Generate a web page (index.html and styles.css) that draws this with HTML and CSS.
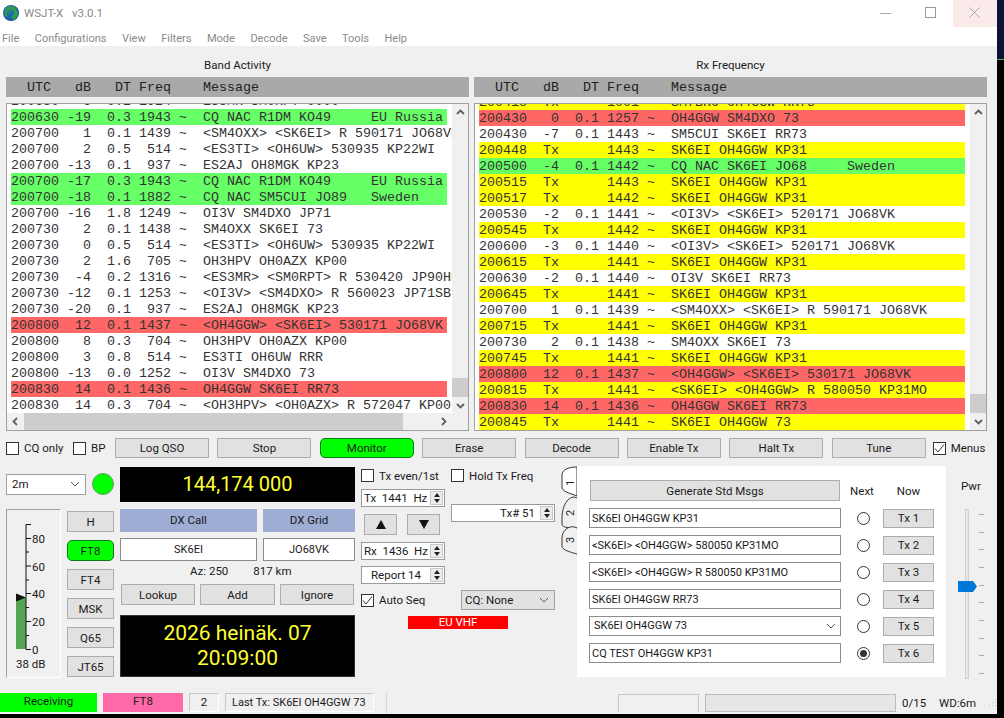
FILE: index.html
```html
<!DOCTYPE html>
<html lang="en">
<head>
<meta charset="utf-8">
<title>WSJT-X v3.0.1</title>
<link rel="stylesheet" href="styles.css">
</head>
<body>
<div class="desktop">
<div class="window">
  <header class="titlebar">
    <svg class="logo" width="18" height="18" viewBox="0 0 18 18">
      <defs><radialGradient id="globe" cx="0.45" cy="0.45" r="0.6"><stop offset="0" stop-color="#1f7f9a"/><stop offset="0.7" stop-color="#1d5fb0"/><stop offset="1" stop-color="#123c8c"/></radialGradient></defs>
      <circle cx="9" cy="9" r="8" fill="url(#globe)"/>
      <path d="M5 3 Q9 1 13 3 L16 9 Q16 14 11 16 L9 13 Q13 11 12 7 Q9 4 6 7 Q4 10 6 13 L3 12 Q1 7 5 3Z" fill="#2e9e4a"/>
    </svg>
    <span class="title">WSJT-X&nbsp;&nbsp; v3.0.1</span>
    <div class="winctl">
      <div class="winbtn"><svg width="12" height="12" viewBox="0 0 12 12"><path d="M0 6.500H11" stroke="#a8a8a8" fill="none"/></svg></div>
      <div class="winbtn"><svg width="12" height="12" viewBox="0 0 12 12"><rect x="0.500" y="0.500" width="10" height="10" stroke="#999" fill="none"/></svg></div>
      <div class="winbtn winclose"><svg width="12" height="12" viewBox="0 0 12 12"><path d="M0.500 0.500L10.500 10.500M10.500 0.500L0.500 10.500" stroke="#aaa" fill="none"/></svg></div>
    </div>
  </header>
  <nav class="menubar">
    <span class="menu">File</span><span class="menu">Configurations</span><span class="menu">View</span><span class="menu">Filters</span><span class="menu">Mode</span><span class="menu">Decode</span><span class="menu">Save</span><span class="menu">Tools</span><span class="menu">Help</span>
  </nav>

  <main class="content">
    <section class="panels">
      <div class="panel panel-left">
        <div class="panel-title">Band Activity</div>
        <div class="heading mono">  UTC   dB   DT Freq    Message</div>
        <div class="listbox">
          <div class="list-main">
            <div class="rows mono rows-left">
              <div class="row">200630   6  0.2 1924 ~  ES3MR SM0RPT 0000</div>
              <div class="row green">200630 -19  0.3 1943 ~  CQ NAC R1DM KO49     EU Russia</div>
              <div class="row">200700   1  0.1 1439 ~  &lt;SM4OXX&gt; &lt;SK6EI&gt; R 590171 JO68VK</div>
              <div class="row">200700   2  0.5  514 ~  &lt;ES3TI&gt; &lt;OH6UW&gt; 530935 KP22WI</div>
              <div class="row">200700 -13  0.1  937 ~  ES2AJ OH8MGK KP23</div>
              <div class="row green">200700 -17  0.3 1943 ~  CQ NAC R1DM KO49     EU Russia</div>
              <div class="row green">200700 -18  0.1 1882 ~  CQ NAC SM5CUI JO89   Sweden</div>
              <div class="row">200700 -16  1.8 1249 ~  OI3V SM4DXO JP71</div>
              <div class="row">200730   2  0.1 1438 ~  SM4OXX SK6EI 73</div>
              <div class="row">200730   0  0.5  514 ~  &lt;ES3TI&gt; &lt;OH6UW&gt; 530935 KP22WI</div>
              <div class="row">200730   2  1.6  705 ~  OH3HPV OH0AZX KP00</div>
              <div class="row">200730  -4  0.2 1316 ~  &lt;ES3MR&gt; &lt;SM0RPT&gt; R 530420 JP90HE</div>
              <div class="row">200730 -12  0.1 1253 ~  &lt;OI3V&gt; &lt;SM4DXO&gt; R 560023 JP71SB</div>
              <div class="row">200730 -20  0.1  937 ~  ES2AJ OH8MGK KP23</div>
              <div class="row red">200800  12  0.1 1437 ~  &lt;OH4GGW&gt; &lt;SK6EI&gt; 530171 JO68VK</div>
              <div class="row">200800   8  0.3  704 ~  OH3HPV OH0AZX KP00</div>
              <div class="row">200800   3  0.8  514 ~  ES3TI OH6UW RRR</div>
              <div class="row">200800 -13  0.0 1252 ~  OI3V SM4DXO 73</div>
              <div class="row red">200830  14  0.1 1436 ~  OH4GGW SK6EI RR73</div>
              <div class="row">200830  14  0.3  704 ~  &lt;OH3HPV&gt; &lt;OH0AZX&gt; R 572047 KP00</div>
            </div>
            <div class="hscroll">
              <div class="sb-btn"><svg width="9" height="9" viewBox="0 0 9 9"><path d="M6 1L2.500 4.500L6 8" class="chev"/></svg></div>
              <div class="hthumb"></div>
              <div class="htrack"></div>
              <div class="sb-btn"><svg width="9" height="9" viewBox="0 0 9 9"><path d="M3 1L6.500 4.500L3 8" class="chev"/></svg></div>
            </div>
          </div>
          <div class="vscroll">
            <div class="sb-btn"><svg width="9" height="9" viewBox="0 0 9 9"><path d="M1 6L4.500 2.500L8 6" class="chev"/></svg></div>
            <div class="vtrack"><div class="vthumb"></div></div>
            <div class="sb-btn"><svg width="9" height="9" viewBox="0 0 9 9"><path d="M1 3L4.500 6.500L8 3" class="chev"/></svg></div>
            <div class="sb-corner"></div>
          </div>
        </div>
      </div>

      <div class="panel panel-right">
        <div class="panel-title">Rx Frequency</div>
        <div class="heading mono">  UTC   dB   DT Freq    Message</div>
        <div class="listbox">
          <div class="list-main">
            <div class="rows mono rows-right">
              <div class="row yellow">200418  Tx      1001 ~  SM7BRO OH4GGW RR73</div>
              <div class="row red">200430   0  0.1 1257 ~  OH4GGW SM4DXO 73</div>
              <div class="row">200430  -7  0.1 1443 ~  SM5CUI SK6EI RR73</div>
              <div class="row yellow">200448  Tx      1443 ~  SK6EI OH4GGW KP31</div>
              <div class="row green">200500  -4  0.1 1442 ~  CQ NAC SK6EI JO68     Sweden</div>
              <div class="row yellow">200515  Tx      1443 ~  SK6EI OH4GGW KP31</div>
              <div class="row yellow">200517  Tx      1442 ~  SK6EI OH4GGW KP31</div>
              <div class="row">200530  -2  0.1 1441 ~  &lt;OI3V&gt; &lt;SK6EI&gt; 520171 JO68VK</div>
              <div class="row yellow">200545  Tx      1442 ~  SK6EI OH4GGW KP31</div>
              <div class="row">200600  -3  0.1 1440 ~  &lt;OI3V&gt; &lt;SK6EI&gt; 520171 JO68VK</div>
              <div class="row yellow">200615  Tx      1441 ~  SK6EI OH4GGW KP31</div>
              <div class="row">200630  -2  0.1 1440 ~  OI3V SK6EI RR73</div>
              <div class="row yellow">200645  Tx      1441 ~  SK6EI OH4GGW KP31</div>
              <div class="row">200700   1  0.1 1439 ~  &lt;SM4OXX&gt; &lt;SK6EI&gt; R 590171 JO68VK</div>
              <div class="row yellow">200715  Tx      1441 ~  SK6EI OH4GGW KP31</div>
              <div class="row">200730   2  0.1 1438 ~  SM4OXX SK6EI 73</div>
              <div class="row yellow">200745  Tx      1441 ~  SK6EI OH4GGW KP31</div>
              <div class="row red">200800  12  0.1 1437 ~  &lt;OH4GGW&gt; &lt;SK6EI&gt; 530171 JO68VK</div>
              <div class="row yellow">200815  Tx      1441 ~  &lt;SK6EI&gt; &lt;OH4GGW&gt; R 580050 KP31MO</div>
              <div class="row red">200830  14  0.1 1436 ~  OH4GGW SK6EI RR73</div>
              <div class="row yellow">200845  Tx      1441 ~  SK6EI OH4GGW 73</div>
            </div>
          </div>
          <div class="vscroll">
            <div class="sb-btn"><svg width="9" height="9" viewBox="0 0 9 9"><path d="M1 6L4.500 2.500L8 6" class="chev"/></svg></div>
            <div class="vtrack"><div class="vthumb"></div></div>
            <div class="sb-btn"><svg width="9" height="9" viewBox="0 0 9 9"><path d="M1 3L4.500 6.500L8 3" class="chev"/></svg></div>
          </div>
        </div>
      </div>
    </section>

    <section class="controls">
      <label class="check c-cq"><span class="box"></span>CQ only</label>
      <label class="check c-bp"><span class="box"></span>BP</label>
      <button class="btn ctl">Log QSO</button>
      <button class="btn ctl">Stop</button>
      <button class="btn ctl on">Monitor</button>
      <button class="btn ctl">Erase</button>
      <button class="btn ctl">Decode</button>
      <button class="btn ctl">Enable Tx</button>
      <button class="btn ctl">Halt Tx</button>
      <button class="btn ctl">Tune</button>
      <label class="check c-menus"><span class="box"><svg width="11" height="11" viewBox="0 0 11 11"><path d="M1 5.500L4 9L10 1.500" fill="none" stroke="#333"/></svg></span>Menus</label>
    </section>

    <section class="lower">
      <div class="col-a">
        <div class="band-row">
          <div class="select band"><span>2m</span><svg width="10" height="6" viewBox="0 0 10 6"><path d="M1 1L5 5L9 1" class="chev-thin"/></svg></div>
          <div class="led"></div>
        </div>
        <div class="meter-row">
          <div class="meter">
            <svg width="52" height="167" viewBox="0 0 52 167">
              <rect x="9" y="88" width="10" height="51" fill="#55a555"/>
              <path d="M9 83.500L19 87.500L9 91.500Z" fill="#111"/>
              <path d="M19 14.500V139.500M19 14.500H24M19 28.500H24M19 42H22M19 56H24M19 70H22M19 83.500H24M19 97.500H22M19 111.500H24M19 125.500H22M19 139.500H24" stroke="#111" fill="none"/>
              <text x="25" y="33" class="m-lbl">80</text>
              <text x="25" y="61" class="m-lbl">60</text>
              <text x="25" y="88" class="m-lbl">40</text>
              <text x="25" y="116" class="m-lbl">20</text>
              <text x="25" y="144" class="m-lbl">0</text>
              <text x="9" y="158" class="m-lbl">38 dB</text>
            </svg>
          </div>
          <div class="modes">
            <button class="btn mode">H</button>
            <button class="btn mode on">FT8</button>
            <button class="btn mode">FT4</button>
            <button class="btn mode">MSK</button>
            <button class="btn mode">Q65</button>
            <button class="btn mode">JT65</button>
          </div>
        </div>
      </div>

      <div class="col-b">
        <div class="display freq">144,174 000</div>
        <div class="dx-grid">
          <div class="dx-label">DX Call</div>
          <div class="dx-label">DX Grid</div>
          <div class="field center">SK6EI</div>
          <div class="field center">JO68VK</div>
        </div>
        <div class="az"><span>Az: 250</span><span>817 km</span></div>
        <div class="lookup">
          <button class="btn">Lookup</button>
          <button class="btn">Add</button>
          <button class="btn">Ignore</button>
        </div>
        <div class="display clock">2026 heinäk. 07<br>20:09:00</div>
      </div>

      <div class="col-c">
        <div class="c-checks">
          <label class="check"><span class="box"></span>Tx even/1st</label>
          <label class="check"><span class="box"></span>Hold Tx Freq</label>
        </div>
        <div class="c-main">
          <div class="c-left">
            <div class="spin"><span class="spin-text sp-tx">Tx&nbsp; 1441&nbsp; Hz</span><span class="spin-btns"><i class="up"></i><i class="down"></i></span></div>
            <div class="arrows">
              <button class="btn arrow"><svg width="10" height="9" viewBox="0 0 10 9"><path d="M5 0L10 9H0Z" fill="#111"/></svg></button>
              <button class="btn arrow"><svg width="10" height="9" viewBox="0 0 10 9"><path d="M0 0H10L5 9Z" fill="#111"/></svg></button>
            </div>
            <div class="spin"><span class="spin-text sp-tx">Rx&nbsp; 1436&nbsp; Hz</span><span class="spin-btns"><i class="up"></i><i class="down"></i></span></div>
            <div class="spin report"><span class="spin-text sp-center">Report 14</span><span class="spin-btns"><i class="up"></i><i class="down"></i></span></div>
          </div>
          <div class="spin txnum"><span class="spin-text sp-right">Tx# 51</span><span class="spin-btns"><i class="up"></i><i class="down"></i></span></div>
        </div>
        <div class="c-seq">
          <label class="check"><span class="box"><svg width="11" height="11" viewBox="0 0 11 11"><path d="M1 5.500L4 9L10 1.500" fill="none" stroke="#333"/></svg></span>Auto Seq</label>
          <div class="select cq"><span>CQ: None</span><svg width="10" height="6" viewBox="0 0 10 6"><path d="M1 1L5 5L9 1" class="chev-thin"/></svg></div>
        </div>
        <div class="euvhf">EU VHF</div>
      </div>

      <svg class="tabs" width="16" height="92" viewBox="0 0 16 92">
        <path d="M16 32 C9 28 1 38 1 52 L1 58 C1 62 9 62 16 62" fill="#f0f0f0" stroke="#222" stroke-width="0.900"/>
        <path d="M16 62 C9 58 1 64 1 72 L1 80 C1 84 9 86 16 88" fill="#f0f0f0" stroke="#222" stroke-width="0.900"/>
        <path d="M16 1 C9 1 1 3 1 9 L1 21 C1 26 9 27 16 30 L16 1Z" fill="#fff" stroke="#222" stroke-width="0.900"/>
        <text transform="translate(13 20) rotate(-90)" class="tab-lbl">1</text>
        <text transform="translate(13 50) rotate(-90)" class="tab-lbl">2</text>
        <text transform="translate(13 77) rotate(-90)" class="tab-lbl">3</text>
      </svg>

      <div class="tx-panel">
        <div class="tx-grid">
          <button class="btn gen">Generate Std Msgs</button>
          <div class="tx-head">Next</div>
          <div class="tx-head">Now</div>

          <div class="field">SK6EI OH4GGW KP31</div>
          <span class="radio"></span>
          <button class="btn txb">Tx 1</button>

          <div class="field">&lt;SK6EI&gt; &lt;OH4GGW&gt; 580050 KP31MO</div>
          <span class="radio"></span>
          <button class="btn txb">Tx 2</button>

          <div class="field">&lt;SK6EI&gt; &lt;OH4GGW&gt; R 580050 KP31MO</div>
          <span class="radio"></span>
          <button class="btn txb">Tx 3</button>

          <div class="field">SK6EI OH4GGW RR73</div>
          <span class="radio"></span>
          <button class="btn txb">Tx 4</button>

          <div class="field combo"><span>SK6EI OH4GGW 73</span><svg width="10" height="6" viewBox="0 0 10 6"><path d="M1 1L5 5L9 1" class="chev-thin"/></svg></div>
          <span class="radio"></span>
          <button class="btn txb">Tx 5</button>

          <div class="field">CQ TEST OH4GGW KP31</div>
          <span class="radio sel"></span>
          <button class="btn txb">Tx 6</button>
        </div>
      </div>

      <div class="pwr">
        <div class="pwr-label">Pwr</div>
        <svg width="50" height="172" viewBox="0 0 50 172">
          <rect x="18.500" y="1.500" width="3" height="169" fill="#e6e6e6" stroke="#d0d0d0"/>
          <path d="M32 6.500H37M32 24.500H37M32 41.500H37M32 59.500H37M32 77.500H37M32 94.500H37M32 112.500H37M32 130.500H37M32 147.500H37M32 165.500H37" stroke="#aaa" fill="none"/>
          <path d="M11 73H26L30 78.500L26 84H11Z" fill="#0078d7"/>
        </svg>
      </div>
    </section>
  </main>

  <footer class="statusbar">
    <div class="st st-rx">Receiving</div>
    <div class="st st-mode">FT8</div>
    <div class="st st-box st-num">2</div>
    <div class="st st-box st-last">Last Tx: SK6EI OH4GGW 73</div>
    <div class="st-spacer"></div>
    <div class="st-blank"></div>
    <div class="st-progress"></div>
    <div class="st-text st-count">0/15</div>
    <div class="st-text st-wd">WD:6m</div>
    <svg class="grip" width="10" height="12" viewBox="0 0 10 12"><path d="M8 2h1v1H8zM5 5h1v1H5zM8 5h1v1H8zM2 8h1v1H2zM5 8h1v1H5zM8 8h1v1H8z" fill="#bdbdbd"/></svg>
  </footer>
</div>
<div class="sliver"></div>
</div>
</body>
</html>
```
FILE: styles.css
```css
* { box-sizing: border-box; }
html, body { margin: 0; height: 100%; background: #000; }
body { font-family: "Roboto", "Liberation Sans", sans-serif; font-size: 11.500px; color: #1a1a1a; overflow: hidden; }
.desktop { display: flex; width: 1004px; height: 718px; }
.window { width: 997px; height: 714px; background: #f0f0f0; display: flex; flex-direction: column; }
.sliver { flex: 1; height: 60px; background: #0c1238; border-bottom: 1px solid #3fae5a; }
.mono { font-family: "Liberation Mono", monospace; font-size: 13.330px; white-space: pre; }

.titlebar { height: 27px; background: #fff; display: flex; align-items: center; padding-left: 2px; }
.logo { margin-top: -1px; }
.title { margin: -1px 0 0 4px; color: #8a8a8a; font-size: 11.500px; }
.winctl { margin-left: auto; display: flex; align-self: stretch; }
.winbtn { width: 45px; display: flex; align-items: center; justify-content: center; }
.winbtn svg { margin-top: -2px; }
.winclose { background: #fbeaea; width: 44px; }
.menubar { height: 19px; background: #fff; display: flex; align-items: center; padding: 3px 0 0 2px; color: #8a8a8a; font-size: 11px; gap: 15.500px; }

.content { flex: 1; display: flex; flex-direction: column; min-height: 0; }
.panels { display: flex; gap: 5px; padding-left: 6px; }
.panel-left { width: 463px; }
.panel-right { width: 513px; }
.panel-title { height: 31px; padding-top: 12px; text-align: center; line-height: 15px; }
.heading { height: 20px; line-height: 22px; background: #a9a9a9; padding-left: 5px; color: #222; }
.listbox { margin-top: 6px; height: 328px; border: 1px solid #a0a0a0; background: #fff; display: flex; }
.list-main { flex: 1; min-width: 0; display: flex; flex-direction: column; }
.rows { flex: 1; min-height: 0; overflow: hidden; display: flex; flex-direction: column; justify-content: flex-end; padding-left: 4px; color: #333; }
.row { flex: none; height: 16px; line-height: 18px; }
.rows-left .row { width: 436px; }
.rows-right .row { width: 486px; }
.rows-right { padding-right: 5px; }
.green { background: #66ff66; }
.red { background: #ff6666; }
.yellow { background: #ffff00; }

.hscroll { flex: none; height: 17px; background: #f0f0f0; display: flex; }
.hthumb { width: 379px; background: #cdcdcd; }
.htrack { flex: 1; }
.sb-btn { flex: none; width: 17px; height: 17px; display: flex; align-items: center; justify-content: center; background: #f0f0f0; }
.chev { fill: none; stroke: #606060; stroke-width: 1.800; }
.chev-thin { fill: none; stroke: #555; stroke-width: 1; }
.vscroll { flex: none; width: 16px; background: #f0f0f0; display: flex; flex-direction: column; }
.vscroll .sb-btn { width: 16px; }
.vtrack { flex: 1; display: flex; flex-direction: column; justify-content: flex-end; }
.vthumb { height: 19px; background: #cdcdcd; }
.sb-corner { height: 16px; flex: none; }

.btn { font: inherit; color: #1a1a1a; background: #e1e1e1; border: 1px solid #adadad; padding: 0; display: flex; align-items: center; justify-content: center; }
.btn.on { background: #00ff00; border: 1px solid #0a7a1a; border-radius: 5px; }

.controls { margin-top: 7px; height: 20px; display: flex; align-items: center; padding-left: 6px; }
.ctl { width: 94px; height: 20px; margin-right: 8.400px; }
.check { display: inline-flex; align-items: center; gap: 5px; white-space: nowrap; }
.box { width: 13px; height: 13px; border: 1px solid #333; background: #fff; display: flex; align-items: center; justify-content: center; flex: none; }
.c-cq { width: 67px; }
.c-bp { width: 42px; }
.c-menus { margin-left: -1.500px; }

.lower { margin-top: 8px; display: flex; padding-left: 6px; align-items: flex-start; }
.col-a { width: 108px; margin-right: 6px; padding-top: 7px; }
.band-row { display: flex; gap: 6px; height: 22px; align-items: center; }
.select { height: 21px; display: flex; align-items: center; justify-content: space-between; padding: 0 5px; border: 1px solid #a0a0a0; background: #fff; }
.band { width: 80px; }
.led { width: 22px; height: 22px; border-radius: 50%; background: #00ff00; border: 1px solid #6a9a6a; }
.meter-row { margin-top: 14px; display: flex; }
.meter { width: 55px; height: 169px; border-top: 1px solid #a0a0a0; border-left: 1px solid #a0a0a0; border-right: 1px solid #fff; border-bottom: 1px solid #fff; }
.meter svg { display: block; }
.m-lbl { font-family: "Roboto", "Liberation Sans", sans-serif; font-size: 11.500px; fill: #1a1a1a; }
.modes { margin-left: 6px; width: 47px; padding-top: 2px; display: flex; flex-direction: column; gap: 8px; }
.mode { height: 21px; }

.col-b { width: 235px; margin-right: 6px; padding-top: 1px; }
.display { background: #000; color: #ffff33; text-align: center; }
.freq { height: 35px; line-height: 35px; font-size: 20px; }
.dx-grid { margin-top: 7px; display: grid; grid-template-columns: 137px 92px; column-gap: 6px; row-gap: 6px; }
.dx-label { height: 23px; line-height: 23px; background: #9dadd3; text-align: center; }
.field { height: 20px; line-height: 20px; border: 1px solid #8c8c8c; background: #fff; padding-left: 2px; white-space: nowrap; font-size: 11px; }
.field.center { height: 23px; line-height: 21px; text-align: center; padding: 0; }
.az { height: 23px; display: flex; align-items: center; padding: 0 0 3px 70px; gap: 25px; }
.lookup { display: grid; grid-template-columns: 74px 75px 74px; column-gap: 5px; padding-left: 1px; }
.lookup .btn { height: 21px; }
.clock { margin-top: 10px; height: 62px; font-size: 21px; line-height: 25px; padding-top: 5px; border: 1px solid #333; }

.col-c { width: 194px; margin-right: 6px; padding-top: 3px; }
.c-checks { display: flex; height: 13px; }
.c-checks .check { width: 90px; }
.c-main { margin-top: 7px; display: flex; gap: 6px; align-items: flex-start; }
.c-left { width: 84px; }
.spin { height: 18px; border: 1px solid #9a9a9a; background: #fff; display: flex; align-items: center; padding-right: 1px; }
.spin-text { flex: 1; white-space: nowrap; }
.sp-tx { padding-left: 2px; }
.sp-center { text-align: center; }
.sp-right { text-align: right; padding-right: 5px; }
.spin-btns { width: 13px; height: 14px; flex: none; display: flex; flex-direction: column; border: 1px solid #c8c8c8; background: #ececec; align-items: center; justify-content: space-evenly; }
.spin-btns i { display: block; width: 0; height: 0; border-left: 3px solid transparent; border-right: 3px solid transparent; }
.up { border-bottom: 4px solid #222; }
.down { border-top: 4px solid #222; }
.arrows { margin: 7px 0; padding: 0 3px; display: flex; gap: 10px; }
.arrow { width: 33px; height: 21px; }
.report { margin-top: 6px; }
.txnum { margin-top: 15px; width: 104px; }
.c-seq { margin-top: 6px; height: 20px; display: flex; align-items: center; }
.c-seq .check { width: 100px; }
.cq { width: 94px; height: 20px; background: #e1e1e1; padding: 0 5px 0 3px; }
.euvhf { margin: 6px 0 0 47px; width: 100px; height: 13px; line-height: 13px; background: #ff0000; color: #fff; text-align: center; }

.tabs { flex: none; display: block; }
.tab-lbl { font-family: "Roboto", "Liberation Sans", sans-serif; font-size: 11px; fill: #222; }
.tx-panel { width: 370px; height: 211px; background: #fff; padding: 14px 0 0 12px; border-right: 1px solid #e8e8e8; flex: none; }
.tx-grid { display: grid; grid-template-columns: 252px 42px 51px; grid-template-rows: 21px repeat(6, 20px); row-gap: 7px; align-items: center; justify-items: center; }
.tx-grid .field { justify-self: stretch; }
.gen { width: 250px; height: 21px; }
.tx-head { text-align: center; }
.radio { width: 13px; height: 13px; margin-left: 3px; border: 1px solid #333; border-radius: 50%; background: #fff; display: flex; align-items: center; justify-content: center; }
.radio.sel::after { content: ""; width: 7px; height: 7px; border-radius: 50%; background: #333; }
.txb { width: 51px; height: 19px; }
.combo { display: flex; align-items: center; justify-content: space-between; padding: 0 4px; }
.pwr { width: 50px; flex: none; }
.pwr-label { height: 42px; padding: 13px 0 0 14px; line-height: 14px; }
.pwr svg { display: block; }

.statusbar { flex: none; height: 22px; display: flex; align-items: center; background: #f0f0f0; }
.st { height: 19px; line-height: 17px; text-align: center; flex: none; margin-top: -2px; white-space: nowrap; }
.st-rx { width: 97px; background: #00ff00; }
.st-mode { width: 80px; margin-left: 6px; background: #ff69a8; }
.st-box { background: #f0f0f0; border: 1px solid #c8c8c8; border-right-color: #fff; border-bottom-color: #fff; margin-left: 6px; }
.st-num { width: 30px; }
.st-last { width: 149px; text-align: left; padding-left: 6px; font-size: 11px; }
.st-spacer { flex: 1; align-self: stretch; margin-left: 12px; border-left: 1px solid #d8d8d8; }
.st-blank { width: 81px; height: 18px; border: 1px solid #c8c8c8; border-bottom: 0; }
.st-progress { width: 191px; height: 18px; margin-left: 6px; background: #e6e6e6; border: 1px solid #bcbcbc; }
.st-text { flex: none; }
.st-count { width: 43px; padding-left: 6px; }
.st-wd { width: 48px; }
.grip { flex: none; }
```
